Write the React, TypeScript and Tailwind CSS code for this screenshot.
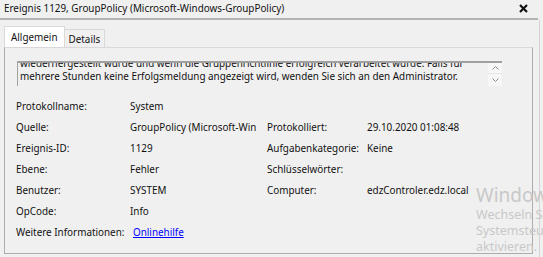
import React from "react"

const font = { fontFamily: '"Noto Sans", "Open Sans", sans-serif' }

const rows = [
  { label: "Protokollname:", value: "System", label2: "", value2: "" },
  { label: "Quelle:", value: "GroupPolicy (Microsoft-Win", label2: "Protokolliert:", value2: "29.10.2020 01:08:48" },
  { label: "Ereignis-ID:", value: "1129", label2: "Aufgabenkategorie:", value2: "Keine" },
  { label: "Ebene:", value: "Fehler", label2: "Schlüsselwörter:", value2: "" },
  { label: "Benutzer:", value: "SYSTEM", label2: "Computer:", value2: "edzControler.edz.local" },
  { label: "OpCode:", value: "Info", label2: "", value2: "" },
]

export default function App() {
  return (
    <div
      className="relative w-[543px] h-[257px] overflow-hidden bg-[#f0f0f0] text-[9.9px] text-[#111]"
      style={font}
    >
      {/* Title bar */}
      <div className="flex h-[20px] w-[538px] items-center justify-between border-b-2 border-[#b4b4b4] pl-[4px] pr-[10px]">
        <span className="leading-none whitespace-nowrap">Ereignis 1129, GroupPolicy (Microsoft-Windows-GroupPolicy)</span>
        <svg width="9" height="9" viewBox="0 0 9 9" className="mb-[2px]">
          <path d="M1 1 L8 8 M8 1 L1 8" stroke="#111" strokeWidth="2.2" />
        </svg>
      </div>

      <div className="w-[540px] h-[237px] border-r border-[#d4d4d4] pt-[6px]">
        {/* Tabs */}
        <div className="flex items-end pl-[4px]">
          <div className="h-[21px] border border-b-0 border-[#d9d9d9] bg-white px-[6px] pt-[3px] leading-[14px]">
            Allgemein
          </div>
          <div className="h-[18px] border border-b-0 border-l-0 border-[#d9d9d9] bg-[#f0f0f0] px-[4px] pt-[2px] leading-[14px]">
            Details
          </div>
        </div>

        {/* Panel */}
        <div className="ml-[4px] h-[207px] w-[529px] border border-[#adadad] border-t-[#d9d9d9] pt-[13px]">
          {/* Description box */}
          <div className="ml-[12px] flex h-[25px] w-[485px] border-t-2 border-l border-[#a0a0a0] overflow-hidden">
            <div className="flex-1 overflow-hidden pl-[2px] leading-[13px]">
              <div className="-mt-[6px] whitespace-nowrap">
                wiedernergestellt wurde und wenn die Gruppenrichtlinie erfolgreich verarbeitet wurde. Falls für
              </div>
              <div className="whitespace-nowrap">
                mehrere Stunden keine Erfolgsmeldung angezeigt wird, wenden Sie sich an den Administrator.
              </div>
            </div>
            <div className="flex w-[14px] flex-col bg-[#f7f7f7]">
              <div className="flex h-[11px] items-center justify-center border-b border-[#e6e6e6]">
                <svg width="7" height="4" viewBox="0 0 7 4">
                  <path d="M0.5 3.5 L3.5 0.5 L6.5 3.5" stroke="#8a8a8a" fill="none" />
                </svg>
              </div>
              <div className="flex h-[11px] items-center justify-center">
                <svg width="7" height="4" viewBox="0 0 7 4">
                  <path d="M0.5 0.5 L3.5 3.5 L6.5 0.5" stroke="#8a8a8a" fill="none" />
                </svg>
              </div>
            </div>
          </div>

          {/* Fields */}
          <div className="mt-[10px] pl-[11px]">
            {rows.map((r) => (
              <div key={r.label} className="flex h-[21px] items-center whitespace-nowrap">
                <span className="w-[114px]">{r.label}</span>
                <span className="w-[137px]">{r.value}</span>
                <span className="w-[100px]">{r.label2}</span>
                <span>{r.value2}</span>
              </div>
            ))}
            <div className="flex h-[20px] items-center whitespace-nowrap">
              <span className="w-[117px]">Weitere Informationen:</span>
              <span className="text-[#0000ff] underline">Onlinehilfe</span>
            </div>
          </div>
        </div>
      </div>

      {/* Windows activation watermark */}
      <div className="absolute left-[476px] top-[183px] whitespace-nowrap text-[#c8c8c8]">
        <div className="text-[19px] leading-[24px]">Windows aktivieren</div>
        <div className="text-[12.5px] leading-[16px]">Wechseln Sie zu den</div>
        <div className="text-[12.5px] leading-[16px]">Systemsteuerung, um</div>
        <div className="text-[12.5px] leading-[16px]">aktivieren.</div>
      </div>
    </div>
  )
}
